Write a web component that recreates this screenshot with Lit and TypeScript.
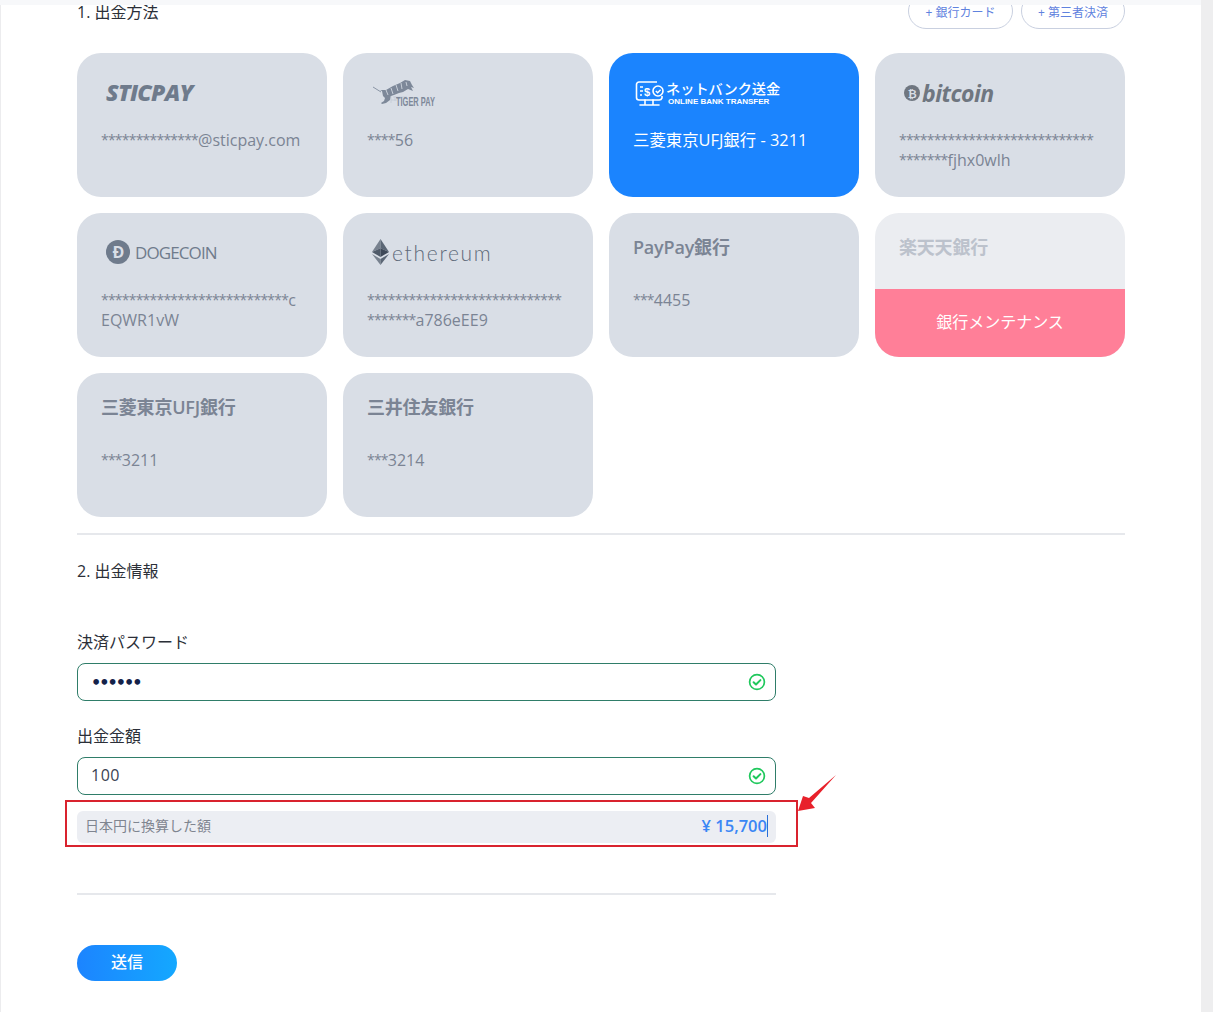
import { LitElement, html, css, svg } from 'lit';
import { customElement } from 'lit/decorators.js';

const check = svg`<svg class="check" width="18" height="18" viewBox="0 0 18 18" fill="none"><circle cx="9" cy="9" r="7.4" stroke="#1fc85c" stroke-width="1.7"/><path d="M5.6 9.2l2.4 2.3 4.4-4.4" stroke="#1fc85c" stroke-width="2" stroke-linecap="round" stroke-linejoin="round"/></svg>`;

const tiger = svg`<svg class="tiger" width="44" height="32" viewBox="0 0 44 32" fill="none">
  <path d="M0 10l8 5" stroke="#8a95a5" stroke-width="1"/>
  <path d="M7 13l6 0 7-4 7-3 5-3 5 1 2 4 2 3-3-1 2 4-5-2-5 3-4 1-5 2-3 1-1 4-4 3-4 1-1-1 3-2 1-3-2-2-1-5z" fill="#7d8899"/>
  <path d="M13 13l2 5M18 11l2 6M23 8l2 6M28 6l1 6M33 5l1 4" stroke="#c7ced8" stroke-width="1"/>
  <path d="M20 20h14M24 23h-6M18 19v7M22 19v5" stroke="#c3cad4" stroke-width="0.8"/>
</svg>`;

const bank = svg`<svg width="30" height="27" viewBox="0 0 30 27" fill="none" stroke="#fff" stroke-width="1.6">
  <path d="M22 2H4a2.500 2.500 0 0 0-2.500 2.500v13A2.500 2.500 0 0 0 4 20h20a3 3 0 0 0 3-2v-2"/>
  <path d="M10 20v4M18 20v4M5 25h19" stroke-linecap="round"/>
  <path d="M5 7h3M5 11h3M5 15h2" stroke-width="1.400"/>
  <text x="9" y="16" font-size="11" font-weight="700" fill="#fff" stroke="none" font-family="Liberation Sans, sans-serif">$</text>
  <circle cx="23" cy="11" r="5"/>
  <path d="M20.800 11l1.800 1.700 3-3" stroke-width="1.400"/>
</svg>`;

const ethIcon = svg`<svg width="17" height="26" viewBox="0 0 17 26"><path d="M8.500 0L0 13l8.500-3.800z" fill="#78828f"/><path d="M8.500 0L17 13 8.500 9.200z" fill="#5b6675"/><path d="M0 13l8.500 5V9.200z" fill="#4f5a69"/><path d="M17 13l-8.500 5V9.200z" fill="#3f4958"/><path d="M0 15l8.500 11v-6z" fill="#78828f"/><path d="M17 15l-8.500 11v-6z" fill="#5b6675"/></svg>`;

type Card = {
  logo?: unknown;
  name?: string;
  lines?: string[];
  selected?: boolean;
  disabled?: boolean;
};

@customElement('app-root')
export class AppRoot extends LitElement {
  static styles = css`
    :host {
      display: block;
      height: 1012px;
      overflow: hidden;
      background: #eeeeef;
      font-family: "Open Sans", "Noto Sans CJK JP", sans-serif;
      color: #2b2f38;
      position: relative;
    }
    .panel {
      width: 1201px;
      height: 1012px;
      box-sizing: border-box;
      background: #fff;
      border-left: 1px solid #ececee;
      padding: 0 76px;
      overflow: hidden;
    }
    .topshade {
      position: absolute;
      left: 0;
      top: 0;
      width: 1201px;
      height: 5px;
      background: #f7f8fa;
    }
    .head {
      display: flex;
      justify-content: space-between;
      margin-top: -7px;
      height: 60px;
    }
    .title {
      font-size: 16px;
      line-height: 20px;
      padding-top: 9px;
    }
    .head-btns {
      display: flex;
      gap: 8px;
      align-items: flex-start;
    }
    .pill {
      box-sizing: border-box;
      height: 36px;
      width: 105px;
      border: 1px solid #c9d0e0;
      border-radius: 18px;
      color: #5f82de;
      font-size: 12px;
      display: flex;
      align-items: center;
      justify-content: center;
      padding-bottom: 1px;
      padding-top: 2px;
    }
    .pill + .pill { width: 104px; }
    .cards {
      display: grid;
      grid-template-columns: repeat(4, 250px);
      grid-auto-rows: 144px;
      gap: 16px;
    }
    .card {
      background: #d9dee6;
      border-radius: 24px;
      padding: 24px 24px 0;
      box-sizing: border-box;
      color: #7b8494;
      font-size: 16px;
      overflow: hidden;
      display: flex;
      flex-direction: column;
    }
    .card.sel {
      background: #1b84fe;
      color: #fff;
    }
    .sel .val {
      font-size: 16.400px;
    }
    .card.off {
      background: #ebedf1;
      color: #bcc2cc;
      padding: 0;
    }
    .off .name { margin: 24px 24px 0; }
    .maint {
      margin-top: auto;
      height: 68px;
      box-sizing: border-box;
      padding-bottom: 5px;
      background: #ff7f98;
      color: #fff;
      display: flex;
      align-items: center;
      justify-content: center;
    }
    .logo {
      height: 32px;
      margin-bottom: 21px;
      display: flex;
      align-items: center;
    }
    .name {
      height: 20px;
      line-height: 20px;
      margin-bottom: 33px;
      font-size: 18px;
      font-weight: 600;
      letter-spacing: -0.200px;
      white-space: nowrap;
    }
    .val {
      line-height: 20px;
      white-space: nowrap;
    }
    .ast {
      font-size: 14px;
      letter-spacing: -0.780px;
      vertical-align: 1px;
    }
    .sticpay {
      font: italic 800 23px "Open Sans", sans-serif;
      color: #6f7b8c;
      margin-left: 5px;
      letter-spacing: -0.700px;
      padding-bottom: 2px;
    }
    .tigerwrap {
      position: relative;
      margin-left: 6px;
      width: 70px;
      height: 32px;
    }
    .tigertext {
      position: absolute;
      left: 23px;
      top: 18px;
      font: 700 12px "Liberation Sans", sans-serif;
      color: #7d8899;
      transform: scaleX(0.620);
      transform-origin: left;
      white-space: nowrap;
    }
    .net {
      display: flex;
      align-items: center;
      gap: 1px;
      margin-left: 2px;
      color: #fff;
    }
    .net-t {
      font-size: 14.200px;
      font-weight: 500;
      line-height: 17px;
    }
    .net-s {
      font-size: 8px;
      font-weight: 700;
      line-height: 9px;
      margin-left: 2px;
      font-family: "Liberation Sans", sans-serif;
    }
    .btc {
      font: italic 700 23px "Open Sans", sans-serif;
      color: #6f7680;
      display: flex;
      align-items: center;
      margin-left: 5px;
      letter-spacing: -0.500px;
    }
    .btc i {
      width: 16px;
      height: 16px;
      border-radius: 50%;
      background: #6f7680;
      color: #d9dee6;
      font: 700 11px "Open Sans", sans-serif;
      display: flex;
      align-items: center;
      justify-content: center;
      margin-right: 2px;
    }
    .doge {
      display: flex;
      align-items: center;
      gap: 5px;
      margin-left: 5px;
      margin-bottom: 2px;
      font-size: 17px;
      color: #6f7b8c;
      letter-spacing: -0.900px;
    }
    .doge i {
      width: 24px;
      height: 24px;
      border-radius: 50%;
      background: #6f7b8c;
      color: #d9dee6;
      font: 700 16px "Open Sans", sans-serif;
      display: flex;
      align-items: center;
      justify-content: center;
    }
    .eth {
      display: flex;
      align-items: center;
      gap: 3px;
      margin-left: 5px;
      margin-bottom: 2px;
      font: 300 21px "Lato", sans-serif;
      letter-spacing: 1.700px;
      color: #5f6a7a;
    }
    .rule {
      height: 2px;
      background: #e6e8ec;
      margin-top: 16px;
    }
    .title2 {
      margin-top: 26px;
      font-size: 16px;
      line-height: 20px;
    }
    .form {
      width: 699px;
      margin-top: 51px;
    }
    .label {
      font-size: 16px;
      line-height: 20px;
      margin-bottom: 11px;
    }
    .input {
      box-sizing: border-box;
      height: 38px;
      border: 1px solid #2f7d69;
      border-radius: 8px;
      padding: 0 9px 0 13px;
      display: flex;
      align-items: center;
      justify-content: space-between;
      font-size: 16px;
      color: #3a4253;
      margin-bottom: 25px;
    }
    .input.amount { margin-bottom: 16px; }
    .amount span {
      letter-spacing: 0.500px;
      padding-bottom: 2px;
    }
    .dots {
      color: #14224a;
      font-size: 16px;
      letter-spacing: -2px;
      font-family: "DejaVu Sans", sans-serif;
      font-weight: 700;
    }
    .conv {
      height: 32px;
      background: #eceef3;
      border-radius: 6px;
      padding: 0 8px;
      display: flex;
      align-items: center;
      justify-content: space-between;
      font-size: 14px;
      color: #7f8590;
    }
    .conv-label { padding-bottom: 5px; }
    .yen {
      color: #3a86f5;
      font-size: 16.500px;
      font-weight: 600;
      border-right: 1px solid #2a6fd8;
      line-height: 22px;
      margin-bottom: 2px;
    }
    .rule2 {
      height: 2px;
      background: #e6e8ec;
      margin-top: 50px;
    }
    .send {
      margin-top: 50px;
      width: 100px;
      height: 36px;
      border: 0;
      border-radius: 18px;
      background: linear-gradient(90deg, #1c84ff, #14a8ff);
      color: #fff;
      font-size: 16px;
      font-weight: 500;
      font-family: inherit;
      display: block;
      padding: 0 0 5px;
    }
    .redbox {
      position: absolute;
      left: 65px;
      top: 800px;
      width: 733px;
      height: 47px;
      box-sizing: border-box;
      border: 2px solid #d9232e;
    }
    .arrow {
      position: absolute;
      left: 796px;
      top: 772px;
    }
  `;

  cards: Card[] = [
    { logo: html`<span class="sticpay">STICPAY</span>`, lines: ['**************@sticpay.com'] },
    { logo: html`<div class="tigerwrap">${tiger}<span class="tigertext">TIGER PAY</span></div>`, lines: ['****56'] },
    {
      selected: true,
      logo: html`<div class="net">${bank}<div><div class="net-t">ネットバンク送金</div><div class="net-s">ONLINE BANK TRANSFER</div></div></div>`,
      lines: ['三菱東京UFJ銀行 - 3211'],
    },
    {
      logo: html`<span class="btc"><i>₿</i>bitcoin</span>`,
      lines: ['****************************', '*******fjhx0wlh'],
    },
    {
      logo: html`<span class="doge"><i>Ð</i>DOGECOIN</span>`,
      lines: ['***************************c', 'EQWR1vW'],
    },
    {
      logo: html`<span class="eth">${ethIcon}ethereum</span>`,
      lines: ['****************************', '*******a786eEE9'],
    },
    { name: 'PayPay銀行', lines: ['***4455'] },
    { name: '楽天天銀行', disabled: true },
    { name: '三菱東京UFJ銀行', lines: ['***3211'] },
    { name: '三井住友銀行', lines: ['***3214'] },
  ];

  // masked runs are set smaller than the visible characters
  renderLine(line: string) {
    return line.split(/(\*+)/).map((part) =>
      part.startsWith('*') ? html`<span class="ast">${part}</span>` : part
    );
  }

  renderCard(c: Card) {
    const cls = c.selected ? 'card sel' : c.disabled ? 'card off' : 'card';
    return html`<div class=${cls}>
      ${c.logo ? html`<div class="logo">${c.logo}</div>` : ''}
      ${c.name ? html`<div class="name">${c.name}</div>` : ''}
      ${c.lines ? html`<div class="val">${c.lines.map((l) => html`<div>${this.renderLine(l)}</div>`)}</div>` : ''}
      ${c.disabled ? html`<div class="maint">銀行メンテナンス</div>` : ''}
    </div>`;
  }

  render() {
    return html`
      <div class="panel">
        <div class="head">
          <div class="title">1. 出金方法</div>
          <div class="head-btns">
            <div class="pill">+ 銀行カード</div>
            <div class="pill">+ 第三者決済</div>
          </div>
        </div>
        <div class="cards">${this.cards.map((c) => this.renderCard(c))}</div>
        <div class="rule"></div>
        <div class="title2">2. 出金情報</div>
        <div class="form">
          <div class="label">決済パスワード</div>
          <div class="input"><span class="dots">••••••</span>${check}</div>
          <div class="label">出金金額</div>
          <div class="input amount"><span>100</span>${check}</div>
          <div class="conv"><span class="conv-label">日本円に換算した額</span><span class="yen">¥ 15,700</span></div>
          <div class="rule2"></div>
          <button class="send">送信</button>
        </div>
      </div>
      <div class="topshade"></div>
      <div class="redbox"></div>
      <svg class="arrow" width="44" height="44" viewBox="0 0 44 44"><path d="M40 3L13 26 7 24 2 39 19 36 15 31z" fill="#e8212b"/></svg>
    `;
  }
}
